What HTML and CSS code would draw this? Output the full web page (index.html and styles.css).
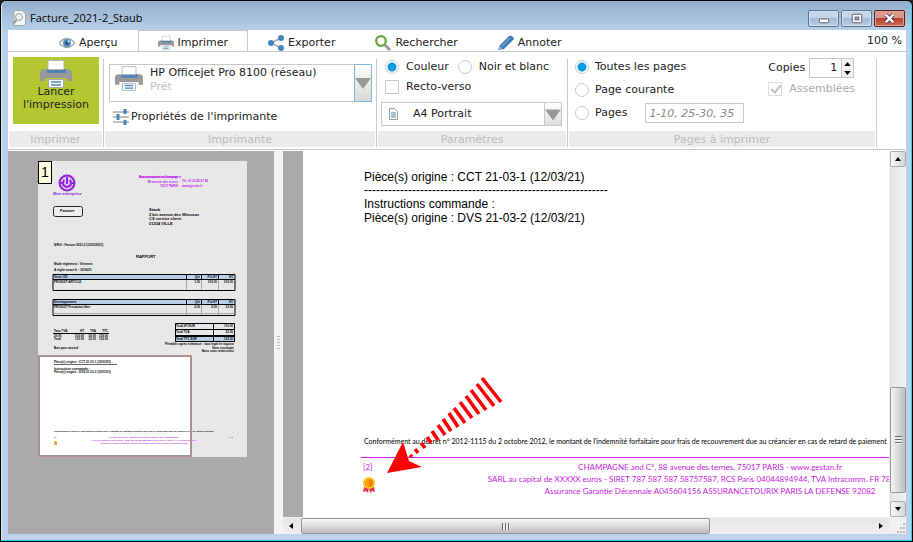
FILE: index.html
```html
<!DOCTYPE html>
<html lang="fr">
<head>
<meta charset="utf-8">
<title>Facture_2021-2_Staub</title>
<link rel="stylesheet" href="styles.css">
</head>
<body>
<svg class="defs" aria-hidden="true">
  <symbol id="printer" viewBox="0 0 32 28">
    <path d="M4 9h24q4 0 4 4v8h-5v-3H5v3H0v-8q0-4 4-4z" fill="#999"/>
    <path d="M7 9h19v4H7z" fill="#4a83b5"/>
    <path d="M8 .5h16V9.500H8z" fill="#fff" stroke="#b5b5b5"/>
    <path d="M8.500 19.500h15v8h-15z" fill="#fff" stroke="#aaa"/>
    <path d="M11 22h10M11 25h10" stroke="#4a8cc4" stroke-width="1.500"/>
  </symbol>
  <symbol id="medal" viewBox="0 0 12 16">
    <path d="M1 10l-1 5 3-1 2 2 1-5 1 5 2-2 3 1-1-5z" fill="#e2325a"/>
    <circle cx="6" cy="6" r="6" fill="#ffc61a"/><circle cx="6" cy="6" r="4" fill="#ff9d0a"/><path d="M6 2a4 4 0 0 1 0 8z" fill="#f57f00"/>
  </symbol>
</svg>
<div class="window">
  <header class="titlebar">
    <svg class="app-icon" viewBox="0 0 14 16"><path d="M2 .5h8l3.500 3.500v11.500H2z" fill="#f6f6f6" stroke="#aaa"/><circle cx="7" cy="7" r="3.500" fill="#e8f0f4" stroke="#999"/><path d="M4.500 10L1 14" stroke="#999" stroke-width="2"/></svg>
    <h1>Facture_2021-2_Staub</h1>
    <div class="win-buttons">
      <button aria-label="Réduire"><svg viewBox="0 0 30 16"><rect x="10.500" y="8.500" width="10" height="4" rx="1" fill="#fff" stroke="#556"/></svg></button>
      <button aria-label="Agrandir"><svg viewBox="0 0 30 16"><rect x="10.500" y="3.500" width="10" height="9" rx="1" fill="#fff" stroke="#556"/><rect x="13.500" y="6.500" width="4" height="3" fill="#9ab" stroke="#556"/></svg></button>
      <button class="close" aria-label="Fermer"><svg viewBox="0 0 30 16"><path d="M11 4l8 8M19 4l-8 8" stroke="#546" stroke-width="4.500"/><path d="M11 4l8 8M19 4l-8 8" stroke="#fff" stroke-width="2.600"/></svg></button>
    </div>
  </header>
  <div class="client">
    <nav class="tabs">
      <button class="tab first"><svg viewBox="0 0 16 16"><path d="M0 8q8-9 16 0q-8 9-16 0z" fill="#fff" stroke="#aaa" stroke-width="1.500"/><circle cx="8" cy="8" r="4" fill="#4a8cc4"/><circle cx="8" cy="8" r="1.800" fill="#246"/><circle cx="9.500" cy="6.500" r="1" fill="#fff"/></svg>Aperçu</button>
      <button class="tab active"><svg><use href="#printer"/></svg>Imprimer</button>
      <button class="tab"><svg viewBox="0 0 16 16"><path d="M13 3L3 8l10 5" fill="none" stroke="#aaa" stroke-width="1.500"/><g fill="#4284bd"><circle cx="3" cy="8" r="3"/><circle cx="13" cy="3" r="3"/><circle cx="13" cy="13" r="3"/></g></svg>Exporter</button>
      <button class="tab"><svg viewBox="0 0 16 16"><path d="M10 10l5 5" stroke="#999" stroke-width="3"/><circle cx="6" cy="6" r="4.800" fill="#fff" stroke="#65a53c" stroke-width="2.300"/></svg>Rechercher</button>
      <button class="tab"><svg viewBox="0 0 16 16"><path d="M0 15l2-5 9-9q2-1 4 1t0 3l-9 9z" fill="#4080ba"/><path d="M0 15l1.500-4 3 3z" fill="#8fb3d4"/><path d="M4 11l8-8" stroke="#8db8dc"/></svg>Annoter</button>
      <span class="zoom">100 %</span>
    </nav>
    <div class="ribbon">
      <section class="group g-print">
        <div class="body"><button class="launch"><svg><use href="#printer"/></svg><span>Lancer<br>l'impression</span></button></div>
        <h2>Imprimer</h2>
      </section>
      <section class="group g-printer">
        <div class="body">
          <button class="combo" aria-haspopup="listbox">
            <svg class="combo-icon"><use href="#printer"/></svg>
            <span class="combo-text">HP Officejet Pro 8100 (réseau)<small>Prêt</small></span>
            <span class="combo-arrow"><svg viewBox="0 0 16 12"><path d="M0 1h16L8 12z" fill="#999"/></svg></span>
          </button>
          <button class="props"><svg viewBox="0 0 16 16"><path d="M0 3h16M0 8h16M0 13h16" stroke="#aaa" stroke-width="1.500"/><path d="M12 0v5M5 5v6M12 11v5" stroke="#4284bd" stroke-width="3"/></svg>Propriétés de l'imprimante</button>
        </div>
        <h2>Imprimante</h2>
      </section>
      <section class="group g-params">
        <div class="body">
          <div class="line">
            <label><input type="radio" name="color" checked>Couleur</label>
            <label><input type="radio" name="color">Noir et blanc</label>
          </div>
          <label class="check"><input type="checkbox">Recto-verso</label>
          <div class="format">
            <svg class="doc" viewBox="0 0 9 12"><path d="M.5.500h5l3 3v8h-8z" fill="#fff" stroke="#999"/><path d="M2 5h5M2 7h5M2 9h5" stroke="#4a83b5"/></svg>
            <select aria-label="Format"><option>A4 Portrait</option></select>
            <svg class="arrow" viewBox="0 0 16 12"><path d="M0 1h16L8 12z" fill="#999"/></svg>
          </div>
        </div>
        <h2>Paramètres</h2>
      </section>
      <section class="group g-pages">
        <div class="body columns">
          <div class="choices">
            <label><input type="radio" name="pages" checked>Toutes les pages</label>
            <label><input type="radio" name="pages">Page courante</label>
            <div class="line range"><label><input type="radio" name="pages">Pages</label><input class="pages-input" type="text" placeholder="1-10, 25-30, 35" aria-label="Plage de pages"></div>
          </div>
          <div class="copies">
            <div class="line"><label for="copies">Copies</label>
              <span class="spin"><input id="copies" type="text" value="1"><span class="spin-buttons"><button aria-label="Plus"><svg viewBox="0 0 8 5"><path d="M0 5h8L4 0z"/></svg></button><button aria-label="Moins"><svg viewBox="0 0 8 5"><path d="M0 0h8L4 5z"/></svg></button></span></span>
            </div>
            <label class="disabled"><input type="checkbox" checked disabled>Assemblées</label>
          </div>
        </div>
        <h2>Pages à imprimer</h2>
      </section>
    </div>
    <main class="viewer">
      <aside class="thumbs">
        <div class="thumb">
          <svg viewBox="0 0 209 296" class="mini">
            <defs><pattern id="hatch" width="4" height="4" patternUnits="userSpaceOnUse"><path fill="#ebebeb" d="M0 0h4v4H0z"/><path d="M0 0l4 4M4 0L0 4" stroke="#e1e1e1" stroke-width=".7"/></pattern></defs>
            <path fill="url(#hatch)" d="M0 0h209v296H0z"/>
            <path d="M0 194h154v102H0z" fill="#fff"/>
            <g class="violet">
              <circle cx="29" cy="22" r="7.500" fill="#dcc6ee" stroke="#8e24d8" stroke-width="2"/>
              <path d="M26 19q-3 6 3 7q6-1 3-7M29 16v7M21 22h4M33 22h4" fill="none" stroke="#8e24d8" stroke-width="2"/>
              <text x="15" y="34" class="t4">Mon entreprise</text>
            </g>
            <g class="magenta">
              <path d="M101 16h39" stroke="#c01ee8" stroke-width="1"/><text x="101" y="17">Mon entreprise et Compagnie</text>
              <text x="140" y="22" class="end">88 avenue des ternes</text><text x="140" y="26" class="end">75017 PARIS</text>
              <text x="144" y="21">Tél. 01 23 45 67 89</text><text x="144" y="26">www.gestan.fr</text>
            </g>
            <rect x="15.500" y="45.500" width="29" height="10" rx="2" fill="#eee" stroke="#222"/>
            <text x="22" y="51" class="t4">Facture</text>
            <text x="111" y="50" class="t4">Staub</text><text x="111" y="55" class="t4">2 bis avenue des Mimosas</text><text x="111" y="59" class="t4">CS service client</text><text x="111" y="64" class="t4">01234 VILLE</text>
            <text x="16" y="85">N/Réf : Facture 2021-2 (12/03/2021)</text>
            <text x="98" y="97" class="t4">RAPPORT</text>
            <text x="16" y="104">Mode règlement : Virement</text><text x="16" y="110">A régler avant le : 12/04/21</text>
            <g stroke="#000" fill="none">
              <path d="M15 113.500h182v5H15zM15 138.500h182v5H15zM137.500 175.500h59v5h-59z" fill="#b7cfe9"/>
              <path d="M15 118v11.500h182V118M15 143v11.500h182V143M137.500 162.500h59v18h-59zM137.500 168.500h59M137.500 174.500h59M175.500 162v18M148.500 114v5M163.500 114v5M180.500 114v5M148.500 139v5M163.500 139v5M180.500 139v5M15 172.500h56"/>
              <path d="M148.500 119v10M163.500 119v10M180.500 119v10M148.500 144v10M163.500 144v10M180.500 144v10M16 152.500h180" stroke="#aaa"/>
              <path d="M16 203.500h63" stroke="#666"/>
            </g>
            <text x="16" y="117">Vente OD</text><text x="162" y="117" class="end">Qté</text><text x="179" y="117" class="end">P.U.HT</text><text x="195" y="117" class="end">HT</text>
            <text x="16" y="122">PRODUIT ARTICLE</text><text x="162" y="122" class="end">1.00</text><text x="179" y="122" class="end">100.00</text><text x="195" y="122" class="end">100.00</text>
            <text x="16" y="142">Développement</text><text x="162" y="142" class="end">Qté</text><text x="179" y="142" class="end">P.U.HT</text><text x="195" y="142" class="end">HT</text>
            <text x="16" y="147">PRODUIT Prestation libre</text><text x="162" y="147" class="end">2.00</text><text x="179" y="147" class="end">5.00</text><text x="195" y="147" class="end">10.00</text>
            <text x="138" y="166">Total HT EUR</text><text x="195" y="166" class="end">110.00</text><text x="138" y="172">Total TVA</text><text x="195" y="172" class="end">22.00</text><text x="138" y="179">Total TTC EUR</text><text x="195" y="179" class="end">132.00</text>
            <text x="16" y="171">Taux TVA</text><text x="46" y="171" class="end">HT</text><text x="58" y="171" class="end">TVA</text><text x="70" y="171" class="end">TTC</text>
            <text x="16" y="176">20.00</text><text x="46" y="176" class="end">100.00</text><text x="58" y="176" class="end">20.00</text><text x="70" y="176" class="end">120.00</text>
            <text x="16" y="179">Total</text><text x="46" y="179" class="end">110.00</text><text x="58" y="179" class="end">22.00</text><text x="70" y="179" class="end">132.00</text>
            <text x="16" y="188">Bon pour accord</text>
            <text x="196" y="184" class="end">Pénalités après échéance : taux légal en vigueur</text><text x="196" y="188" class="end">Sans escompte</text><text x="196" y="191" class="end">Nous vous remercions</text>
            <text x="16" y="202">Pièce(s) origine : CCT 21-03-1 (12/03/21)</text><text x="16" y="209">Instructions commande :</text><text x="16" y="212">Pièce(s) origine : DVS 21-03-2 (12/03/21)</text>
            <text x="16" y="271" class="t2">Conformément au décret n° 2012-1115 du 2 octobre 2012, le montant de l'indemnité forfaitaire pour frais de recouvrement due au créancier en cas de retard de paiement</text>
            <g class="magenta t2"><text x="16" y="277">[2]</text><text x="106" y="277" class="mid">CHAMPAGNE and C°, 88 avenue des ternes, 75017 PARIS - www.gestan.fr</text><text x="106" y="280" class="mid">SARL au capital de XXXXX euros - SIRET 787 587 587 58757587, RCS Paris 04044894944, TVA Intracomm. FR 7</text><text x="106" y="283" class="mid">Assurance Garantie Décennale A045604156 ASSURANCETOURIX PARIS LA DEFENSE 92082</text><text x="191" y="277">2 / 2</text></g>
            <use href="#medal" x="16" y="280" width="3" height="4"/>
            <rect x=".5" y="194.500" width="153" height="101" fill="none" stroke="#bd8d90"/><rect x="1.500" y="195.500" width="151" height="99" fill="none" stroke="#959595"/>
          </svg>
          <span class="badge">1</span>
        </div>
      </aside>
      <div class="splitter"><i></i></div>
      <div class="scroller">
        <article class="page">
          <div class="notes"><p>Pièce(s) origine : CCT 21-03-1 (12/03/21)</p><p class="dashes">-------------------------------------------------------------</p><p>Instructions commande :</p><p>Pièce(s) origine : DVS 21-03-2 (12/03/21)</p></div>
          <footer class="legal">
            <p class="decree">Conformément au décret n° 2012-1115 du 2 octobre 2012, le montant de l'indemnité forfaitaire pour frais de recouvrement due au créancier en cas de retard de paiement</p>
            <div class="company">
              <div class="mark"><span>[2]</span><svg><use href="#medal"/></svg></div>
              <div class="lines"><p>CHAMPAGNE and C°, 88 avenue des ternes, 75017 PARIS - www.gestan.fr</p><p>SARL au capital de XXXXX euros - SIRET 787 587 587 58757587, RCS Paris 04044894944, TVA Intracomm. FR 78758758757</p><p>Assurance Garantie Décennale A045604156 ASSURANCETOURIX PARIS LA DEFENSE 92082</p></div>
            </div>
          </footer>
          <svg class="pointer" viewBox="0 0 118 98">
            <path d="M1 97L17 66l6 19 13 6z" fill="#f00"/>
            <path d="M96 2l19 24M91 8l17 22M85 14l15 20M80 20l13 18M74 26l12 16M68 32l11 15M63 37l9 14M57 43l8 12M52 49l7 10M46 55l6 9M41 61l4 6M35 67l4 5M29 73l3 4M24 79l2 2" stroke="#f00" stroke-width="3.600"/>
          </svg>
        </article>
        <div class="vbar">
          <button aria-label="Haut"><svg viewBox="0 0 6 4"><path d="M0 4h6L3 0z"/></svg></button>
          <div class="thumbgrip"><i></i></div>
          <button aria-label="Bas"><svg viewBox="0 0 6 4"><path d="M0 0h6L3 4z"/></svg></button>
        </div>
        <div class="hbar">
          <button aria-label="Gauche"><svg viewBox="0 0 4 6"><path d="M4 0v6L0 3z"/></svg></button>
          <div class="thumbgrip"><i></i></div>
          <button aria-label="Droite"><svg viewBox="0 0 4 6"><path d="M0 0v6l4-3z"/></svg></button>
        </div>
        <svg class="grip" viewBox="0 0 16 16"><path d="M13 5h2v2h-2zM10 9h2v2h-2zM13 9h2v2h-2zM7 13h2v2H7zM10 13h2v2h-2zM13 13h2v2h-2z" fill="#bbb"/></svg>
      </div>
    </main>
  </div>
</div>
</body>
</html>
```
FILE: styles.css
```css
* { box-sizing: border-box; }
body, h1, h2, p { margin: 0; }
body {
  height: 100vh;
  background: #222;
  color: #222;
  font: 11px/14px "DejaVu Sans", Verdana, sans-serif;
}
button, input, select { font: inherit; color: inherit; margin: 0; padding: 0; }
button { border: 0; background: none; }
.defs { position: absolute; width: 0; height: 0; }

.window {
  height: 100vh;
  display: flex;
  flex-direction: column;
  padding: 0 6px 7px;
  border: 1px solid #000;
  border-radius: 6px 6px 0 0;
  box-shadow: inset -1px -1px 0 #35cde6, inset 1px 0 0 #dcecf8;
  background: linear-gradient(#93afce, #b9d1ea 32px);
  overflow: hidden;
}
.titlebar { display: flex; flex: 0 0 29px; align-items: center; padding: 5px 1px 0 5px; gap: 4px; }
.titlebar h1 { flex: 1; font: 11px/16px "Open Sans", sans-serif; color: #000; }
.app-icon { width: 14px; height: 16px; }
.win-buttons { display: flex; gap: 2px; }
.win-buttons button {
  width: 31px; height: 17px;
  border: 1px solid #5a7391; border-radius: 2px;
  box-shadow: inset 0 0 0 1px #d5e3f0;
  background: linear-gradient(#c3d5e8 45%, #a3bad3 50%, #b9cde2);
}
.win-buttons .close { border-color: #5b2020; box-shadow: inset 0 0 0 1px #dfa39b; background: linear-gradient(#dd9a8c 45%, #b8402a 50%, #cc6a50); }
.win-buttons svg { display: block; width: 29px; height: 15px; }

.client { flex: 1; min-height: 0; display: flex; flex-direction: column; margin: 0 0 0 1px; background: #fff; }
.tabs { display: flex; flex: 0 0 21px; border-bottom: 1px solid #c8c8cc; }
.tab { display: flex; align-items: center; gap: 4px; height: 21px; padding: 3px 19px 0; border: solid transparent; border-width: 1px 1px 0; white-space: nowrap; }
.tab svg { width: 16px; height: 16px; }
.tab.first { margin-left: 31px; }
.tab.active { border-color: #c8c8cc; background: #fff; }
.zoom { margin-left: auto; padding: 4px 4px 0; }

.ribbon { display: flex; flex: 0 0 98px; padding-top: 7px; border-bottom: 1px solid #c8c8cc; }
.group { display: flex; flex-direction: column; height: 88px; border-right: 1px solid #c8c8cc; padding-right: 1px; }
.group .body { height: 72px; }
.group h2 { height: 16px; margin-left: 1px; background: #ebebeb; color: #bbb; font: 11px/18px "DejaVu Sans", Verdana, sans-serif; text-align: center; }
.g-print { flex: 0 0 96px; }
.g-printer { flex: 0 0 273px; }
.g-params { flex: 0 0 191px; }
.g-pages { flex: 0 0 309px; }
.launch { display: flex; flex-direction: column; align-items: center; width: 86px; height: 67px; margin: -2px 0 0 5px; padding-top: 3px; background: #b2c731; line-height: 13px; }
.launch svg { flex: 0 0 28px; width: 32px; margin-bottom: -3px; }
.combo { display: flex; width: 263px; height: 38px; margin: 5px 0 0 5px; border: 1px solid #c8c8cc; text-align: left; }
.combo-icon { width: 28px; height: 25px; margin: 1px 0 0 5px; }
.combo-text { flex: 1; padding: 1px 0 0 7px; }
.combo-text small { display: block; font-size: 11px; color: #c0c0c0; }
.combo-arrow { width: 18px; margin: -1px; display: flex; align-items: center; border: 1px solid #7db8dc; background: linear-gradient(#fff, #eee 40%, #d8d8d8); }
.combo-arrow svg { width: 16px; height: 12px; }
.props { display: flex; align-items: center; gap: 2px; margin: 7px 0 0 9px; }
.props svg { width: 16px; height: 16px; }

label { display: flex; align-items: center; gap: 7px; white-space: nowrap; }
.line { display: flex; align-items: center; }
input[type=radio], input[type=checkbox] { appearance: none; flex: none; width: 14px; height: 14px; border: 1px solid #c4cbd2; background: #fff; }
input[type=radio] { border-radius: 50%; }
input[type=radio]:checked { background: radial-gradient(circle, #0b9be3 4px, #fff 5px); }
.g-params .body { padding: 1px 4px 0 8px; }
.g-params .line { gap: 9px; }
.check { margin-top: 6px; }
.format { position: relative; height: 24px; margin: 8px 0 0 -4px; border: 1px solid #c8c8cc; }
.format select { appearance: none; width: 100%; height: 22px; border: 0; background: none; padding-left: 31px; }
.format .doc { position: absolute; left: 7px; top: 5px; width: 9px; height: 12px; }
.format .arrow { position: absolute; right: 0; top: 0; width: 17px; height: 22px; padding-top: 1px; border-left: 1px solid #c8c8cc; background: linear-gradient(#fff, #ddd); pointer-events: none; }

.columns { display: flex; justify-content: space-between; padding: 0 20px 0 7px; }
.choices { display: flex; flex-direction: column; gap: 9px; padding-top: 1px; }
.range { height: 14px; gap: 18px; }
.choices label { gap: 6px; }
.pages-input { width: 99px; height: 20px; padding: 0 3px; border: 1px solid #c8c8cc; }
.pages-input::placeholder { color: #888; font-style: italic; opacity: 1; }
.copies .line { gap: 4px; margin-top: -1px; }
.spin { display: flex; width: 45px; height: 20px; border: 1px solid #c8c8cc; }
.spin input { flex: 1; min-width: 0; padding-right: 4px; border: 0; text-align: right; }
.spin-buttons { display: flex; flex-direction: column; width: 12px; border-left: 1px solid #c8c8cc; }
.spin-buttons button { flex: 1; display: flex; align-items: center; justify-content: center; background: #f2f2f2; }
.spin-buttons svg { width: 7px; height: 4px; }
.disabled { margin-top: 4px; color: #aaa; }
.disabled input { position: relative; border-color: #ddd; }
.disabled input::after { content: ""; position: absolute; left: 4px; top: 0; width: 4px; height: 8px; border: solid #c0c0c0; border-width: 0 2px 2px 0; transform: rotate(40deg); }

.viewer { flex: 1; min-height: 0; display: flex; margin-top: 1px; background: #f3f3f3; }
.thumbs { flex: 0 0 266px; padding: 10px 27px 0 30px; background: #aaa; }
.thumb { position: relative; }
.mini { display: block; width: 209px; height: 296px; }
.mini text { font: bold 3px "Liberation Sans", sans-serif; fill: #000; }
.mini .t4 { font-size: 4px; }
.mini .t2, .mini .t2 text { font-size: 2px; }
.mini .end { text-anchor: end; }
.mini .mid { text-anchor: middle; }
.mini .violet text { fill: #8e24d8; }
.mini .magenta text { fill: #c01ee8; }
.badge { position: absolute; left: 0; top: 0; width: 14px; height: 23px; border: 1px solid #000; background: #ffffe1; color: #000; font: 14px/21px "Liberation Sans", sans-serif; text-align: center; }
.splitter { flex: 0 0 9px; display: flex; align-items: center; justify-content: center; }
.splitter i { width: 3px; height: 14px; background: repeating-linear-gradient(#bbb 0 1px, #f3f3f3 1px 3px); }
.scroller { flex: 1; min-width: 0; display: grid; grid-template: minmax(0, 1fr) 16px / minmax(0, 1fr) 16px; column-gap: 1px; row-gap: 1px; background: #f0f0f0; }
.page { position: relative; display: flex; flex-direction: column; justify-content: space-between; overflow: hidden; padding: 19px 0 20px 58px; border-left: 20px solid #aaa; background: #fff; color: #000; }
.notes { padding-left: 3px; font: 12px/14px "Liberation Sans", Arial, sans-serif; }
.notes .dashes { line-height: 13px; }
.legal { width: 698px; font-family: Lato, sans-serif; }
.decree { padding-left: 3px; font-size: 7px; line-height: 12px; white-space: nowrap; }
.company { display: flex; margin-top: 10px; padding-top: 3px; border-top: 1px solid #d01ae8; color: #c81ae0; font-size: 8px; line-height: 12px; }
.mark { display: flex; flex-direction: column; width: 14px; padding-left: 2px; gap: 4px; }
.mark svg { width: 12px; height: 16px; }
.lines { flex: 1; text-align: center; white-space: nowrap; margin-right: 14px; }
.pointer { position: absolute; left: 83px; bottom: 43px; width: 118px; height: 98px; }

.vbar { display: flex; flex-direction: column; align-items: stretch; background: linear-gradient(90deg, #e3e3e3, #f3f3f3); }
.hbar { display: flex; background: linear-gradient(#e6e6e6, #f0f0f0); }
.vbar button, .hbar button { flex: 0 0 16px; display: flex; align-items: center; justify-content: center; }
.vbar button { border: 1px solid #aaa; border-radius: 2px; background: linear-gradient(90deg, #f8f8f8, #d5d5d5); }
.vbar svg { width: 6px; height: 4px; }
.hbar svg { width: 4px; height: 6px; }
.thumbgrip { display: flex; align-items: center; justify-content: center; border: 1px solid #979797; border-radius: 2px; }
.vbar .thumbgrip { height: 106px; margin: auto 0 8px; background: linear-gradient(90deg, #f5f5f5, #d9d9d9 50%, #bcbdc0); }
.hbar .thumbgrip { flex: 0 1 409px; margin: 0 auto 0 2px; background: linear-gradient(#f5f5f5, #dcdcdc 50%, #bcbdc0); }
.vbar i { width: 7px; height: 8px; background: repeating-linear-gradient(#666 0 1px, #eee 1px 3px); }
.hbar i { width: 8px; height: 7px; background: repeating-linear-gradient(90deg, #666 0 1px, #eee 1px 3px); }
.grip { width: 16px; height: 16px; }
```
